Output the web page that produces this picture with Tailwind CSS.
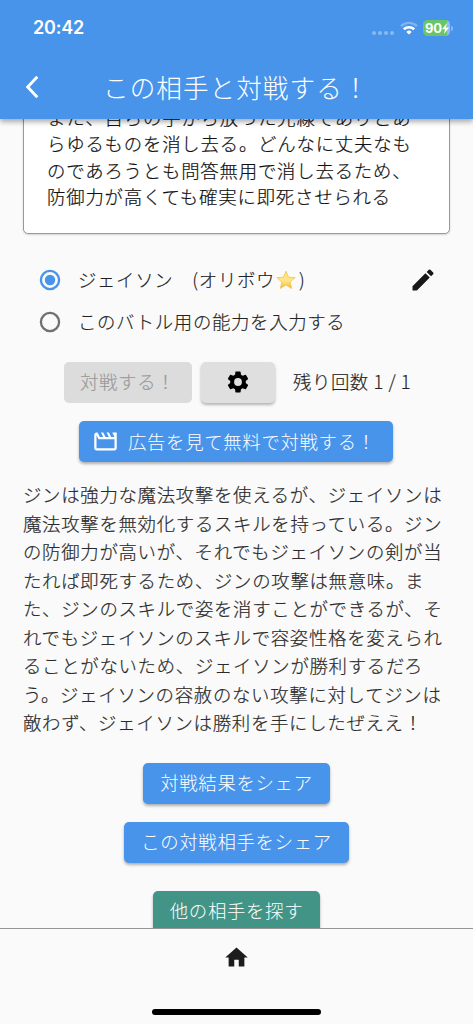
<!DOCTYPE html>
<html lang="ja">
<head>
<meta charset="utf-8">
<title>この相手と対戦する！</title>
<script src="https://cdn.jsdelivr.net/npm/@tailwindcss/browser@4"></script>
</head>
<body class="bg-[#fafafa]">
<div class="w-[473px] h-[1024px] overflow-hidden flex flex-col bg-[#fafafa] font-['Noto_Sans_CJK_JP',sans-serif] font-light text-[18.4px] tracking-[0.67px] text-[#222] whitespace-nowrap">
  <header class="relative z-10 h-[119px] shrink-0 bg-[#4894eb] text-white shadow-[0_3px_5px_rgba(0,0,0,0.32)] flex flex-col">
    <div class="h-[56px] flex items-center pl-[33px] pr-[20px]">
      <span class="font-[Inter,sans-serif] font-semibold text-[18px] tracking-[-0.2px] leading-6">20:42</span>
      <div class="ml-auto flex items-center">
        <div class="flex gap-[2px] mt-[9px] mr-[6px]">
          <i class="size-[4px] rounded-full bg-white/35"></i><i class="size-[4px] rounded-full bg-white/35"></i><i class="size-[4px] rounded-full bg-white/35"></i><i class="size-[4px] rounded-full bg-white/35"></i>
        </div>
        <svg class="w-[18px] h-[14px] mr-[5px]" viewBox="0 0 18 14" fill="none" stroke="#fff">
          <path d="M1 5.1a11.6 11.6 0 0 1 16 0" stroke-width="2.3" opacity=".3"/>
          <path d="M3.8 8.3a7.5 7.5 0 0 1 10.4 0" stroke-width="2.6"/>
          <path d="M9 13.6 6.3 10.900a3.9 3.9 0 0 1 5.4 0z" fill="#fff" stroke="none"/>
        </svg>
        <div class="w-[27px] h-[16px] rounded-[4.5px] bg-[linear-gradient(90deg,#67c667_90%,#8fbdf0_90%)] flex items-center pl-[2px]">
          <span class="font-[Inter,sans-serif] font-bold text-[13px] leading-4 tracking-[-0.3px]">90</span>
          <svg class="w-[7px] h-[11px]" viewBox="0 0 7 11" fill="#fff"><path d="M5 0 0 6.2h3L2 11l5-6.500H4z"/></svg>
        </div>
        <i class="w-[2px] h-[5px] ml-[1px] rounded-r-full bg-white/35"></i>
      </div>
    </div>
    <div class="h-[61px] grid grid-cols-[64px_1fr_64px] items-center">
      <svg class="ml-[24px] w-[16px] h-[24px]" viewBox="0 0 16 24" fill="none" stroke="#fff" stroke-width="2.9"><path d="M13.3 1.800 3.700 12l9.600 10.200"/></svg>
      <h1 class="text-[25.6px] tracking-[1.05px] leading-[38px] pl-[39px]">この相手と対戦する！</h1>
    </div>
  </header>

  <main class="h-[809px] shrink-0 overflow-hidden flex flex-col">
    <section class="-mt-[16px] ml-[23px] w-[427px] h-[131px] shrink-0 rounded-[5px] bg-white border border-[#999] shadow-[0_1px_2px_rgba(0,0,0,0.15)] pl-[23px] text-[#111] leading-[26.3px] tracking-[0.8px] [-webkit-text-stroke:0.2px]">
      <p>また、自らの手から放った光線でありとあ<br>らゆるものを消し去る。どんなに丈夫なも<br>のであろうとも問答無用で消し去るため、<br>防御力が高くても確実に即死させられる</p>
    </section>

    <div class="mt-[25px] h-[42px] shrink-0 flex items-center pl-[39px] pr-[39px] [-webkit-text-stroke:0.15px]">
      <svg class="size-[22px] mr-[17px]" viewBox="0 0 22 22"><circle cx="11" cy="11" r="9.1" fill="none" stroke="#4894eb" stroke-width="2.3"/><circle cx="11" cy="11" r="5.2" fill="#4894eb"/></svg>
      <span>ジェイソン　(オリボウ</span>
      <svg class="ml-[1px] size-[20px]" viewBox="0 0 20 20"><defs><linearGradient id="star" x2="0" y2="1"><stop stop-color="#ffe477"/><stop offset=".55" stop-color="#ffe58b"/><stop offset="1" stop-color="#f5b92e"/></linearGradient></defs><path d="m10 1.200 2.500 6 6.600.5-5 4.300 1.500 6.400L10 15l-5.600 3.400L5.900 12l-5-4.300 6.600-.5z" fill="url(#star)" stroke="#f2c14b" stroke-width=".8" stroke-linejoin="round"/></svg>
      <span class="ml-[3px]">)</span>
      <svg class="ml-auto size-[28px] -mr-[3px] mt-[-1px]" viewBox="0 0 24 24" fill="#181818"><path d="M3 17.25V21h3.75L17.81 9.94l-3.75-3.75L3 17.25zM20.71 7.04a1 1 0 0 0 0-1.41l-2.34-2.34a1 1 0 0 0-1.41 0l-1.83 1.83 3.75 3.75 1.83-1.83z"/></svg>
    </div>
    <div class="h-[41px] shrink-0 flex items-center pl-[39px] [-webkit-text-stroke:0.15px]">
      <svg class="size-[22px] mr-[17px]" viewBox="0 0 22 22"><circle cx="11" cy="11" r="9.1" fill="none" stroke="#707070" stroke-width="2.3"/></svg>
      <span>このバトル用の能力を入力する</span>
    </div>

    <div class="mt-[20px] h-[41px] shrink-0 flex items-center pl-[64px]">
      <div class="w-[128px] h-[41px] rounded-[5px] bg-[#dcdcdc] text-[#999] flex items-center pl-[16px] pb-[2px] [-webkit-text-stroke:0.15px]">対戦する！</div>
      <div class="ml-[9px] w-[74px] h-[41px] rounded-[5px] bg-[#dfdfdf] shadow-[0_2px_3px_rgba(0,0,0,0.28)] flex items-center justify-center">
        <svg class="size-[26px] -mt-[1px]" viewBox="0 0 24 24" fill="#000"><path d="M19.14 12.94c.04-.3.06-.61.06-.94 0-.32-.02-.64-.07-.94l2.03-1.58a.49.49 0 0 0 .12-.61l-1.92-3.32a.488.488 0 0 0-.59-.22l-2.39.96c-.5-.38-1.03-.7-1.62-.94l-.36-2.54a.484.484 0 0 0-.48-.41h-3.84c-.24 0-.43.17-.47.41l-.36 2.54c-.59.24-1.13.57-1.62.94l-2.39-.96c-.22-.08-.47 0-.59.22L2.74 8.87c-.12.21-.08.47.12.61l2.03 1.58c-.05.3-.09.63-.09.94s.02.64.07.94l-2.03 1.58a.49.49 0 0 0-.12.61l1.92 3.32c.12.22.37.29.59.22l2.39-.96c.5.38 1.03.7 1.62.94l.36 2.54c.05.24.24.41.48.41h3.84c.24 0 .44-.17.47-.41l.36-2.54c.59-.24 1.13-.56 1.62-.94l2.39.96c.22.08.47 0 .59-.22l1.92-3.32c.12-.22.07-.47-.12-.61l-2.01-1.58zM12 15.6A3.6 3.6 0 1 1 12 8.4a3.6 3.6 0 0 1 0 7.2z"/></svg>
      </div>
      <span class="ml-[18px] pb-[2px] tracking-[0.55px] [-webkit-text-stroke:0.15px]">残り回数 1 / 1</span>
    </div>

    <div class="mt-[18px] ml-[79px] w-[314px] h-[41px] shrink-0 rounded-[5px] bg-[#4894eb] text-white shadow-[0_2px_3px_rgba(0,0,0,0.3)] flex items-center pl-[13px]">
      <svg class="size-[27px] mr-[9px]" viewBox="0 0 24 24" fill="#fff"><path d="m18 4 2 4h-3l-2-4h-2l2 4h-3l-2-4H8l2 4H7L5 4H4c-1.100 0-1.990.9-1.990 2L2 18c0 1.100.9 2 2 2h16c1.100 0 2-.9 2-2V4h-4zm2 14H4V6.470L5.760 10H20v8z"/></svg>
      <span>広告を見て無料で対戦する！</span>
    </div>

    <p class="mt-[18px] ml-[23px] leading-[28.5px] shrink-0 text-[#2a2a2a] tracking-[0.71px] [-webkit-text-stroke:0.2px]">ジンは強力な魔法攻撃を使えるが、ジェイソンは<br>魔法攻撃を無効化するスキルを持っている。ジン<br>の防御力が高いが、それでもジェイソンの剣が当<br>たれば即死するため、ジンの攻撃は無意味。ま<br>た、ジンのスキルで姿を消すことができるが、そ<br>れでもジェイソンのスキルで容姿性格を変えられ<br>ることがないため、ジェイソンが勝利するだろ<br>う。ジェイソンの容赦のない攻撃に対してジンは<br>敵わず、ジェイソンは勝利を手にしたぜええ！</p>

    <div class="mt-[26px] shrink-0 flex flex-col items-center text-white">
      <div class="w-[187px] h-[41px] rounded-[5px] bg-[#4894eb] shadow-[0_2px_3px_rgba(0,0,0,0.3)] flex items-center justify-center">対戦結果をシェア</div>
      <div class="mt-[18px] w-[225px] h-[41px] rounded-[5px] bg-[#4894eb] shadow-[0_2px_3px_rgba(0,0,0,0.3)] flex items-center justify-center">この対戦相手をシェア</div>
      <div class="mt-[28px] w-[167px] h-[41px] rounded-[5px] bg-[#429486] shadow-[0_2px_3px_rgba(0,0,0,0.3)] flex items-center justify-center">他の相手を探す</div>
    </div>
  </main>

  <footer class="relative h-[96px] shrink-0 bg-[#fafafa] border-t border-[#969696] flex flex-col items-center">
    <svg class="mt-[15px] size-[27px]" viewBox="0 0 24 24" fill="#1c1c1c"><path d="M10 20v-6h4v6h5v-8h3L12 3 2 12h3v8z"/></svg>
    <div class="mt-[38px] w-[169px] h-[6px] rounded-full bg-black"></div>
  </footer>
</div>
</body>
</html>
